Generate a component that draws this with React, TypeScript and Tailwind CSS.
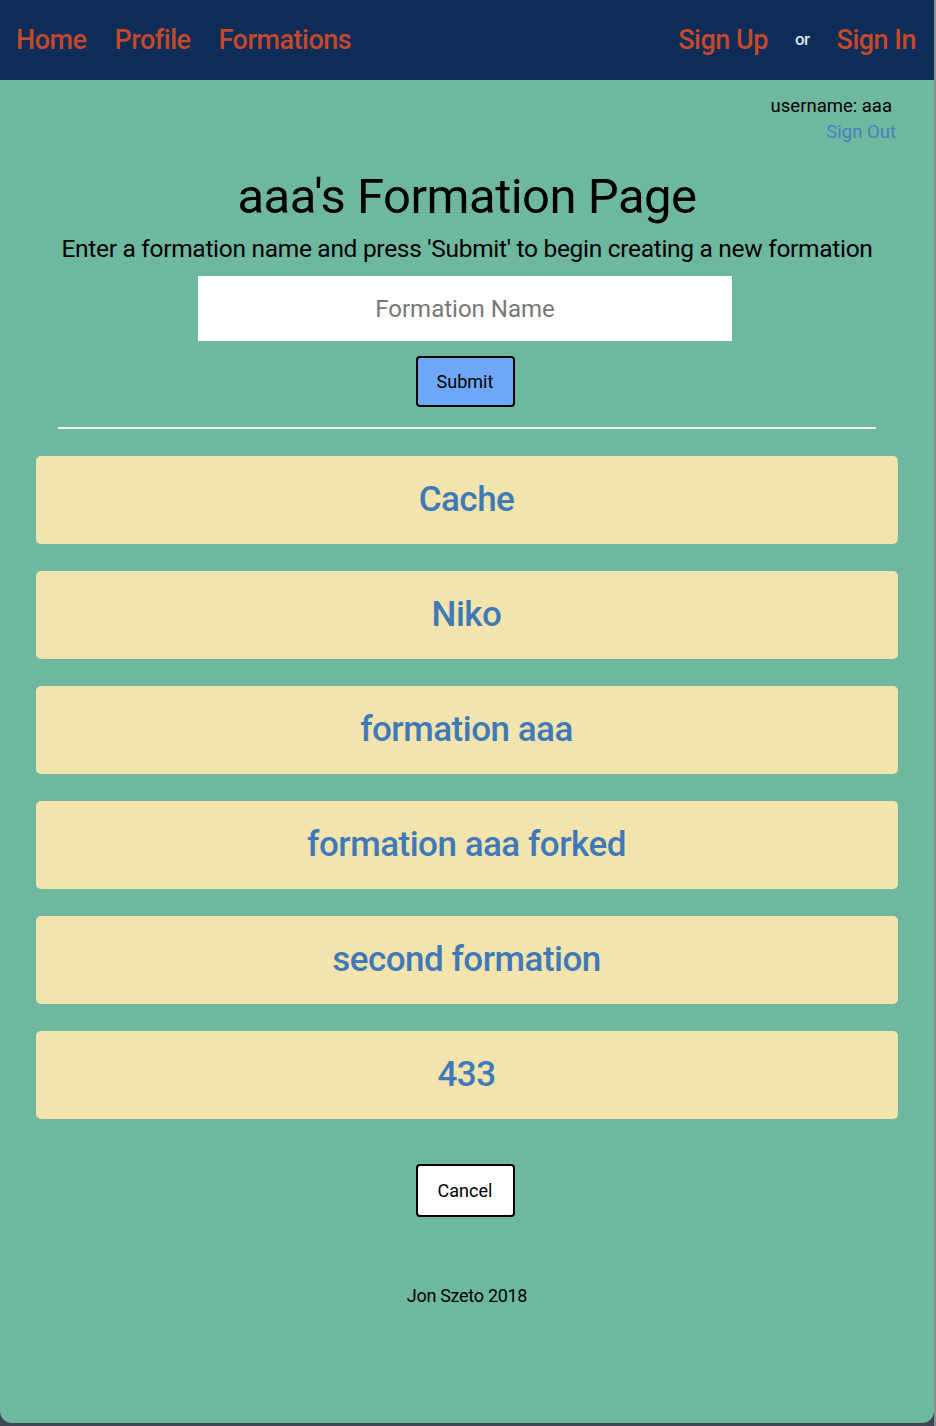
import React from "react";

const formations = ["Cache", "Niko", "formation aaa", "formation aaa forked", "second formation", "433"];

export default function App() {
  return (
    <div className="w-[936px] h-[1426px] bg-[#3d4650] flex" style={{ fontFamily: "Roboto, 'Liberation Sans', sans-serif" }}>
      <div className="w-[934px] h-[1423px] bg-[#6fb8a0] rounded-b-[12px] overflow-hidden flex flex-col">
        <nav className="h-[80px] shrink-0 bg-[#0d2c58] flex items-center justify-between pl-[16px] pr-[18px]">
          <div className="flex items-center gap-[28px] text-[27px] font-medium text-[#c4492a] tracking-[-0.5px]">
            <span>Home</span>
            <span>Profile</span>
            <span>Formations</span>
          </div>
          <div className="flex items-center text-[27px] font-medium text-[#c4492a] tracking-[-0.5px]">
            <span>Sign Up</span>
            <span className="mx-[27px] text-[17px] text-[#dfe3ea]">or</span>
            <span>Sign In</span>
          </div>
        </nav>
        <main className="flex flex-col items-center flex-1">
          <div className="self-end flex flex-col items-end pt-[13px] pr-[38px] text-[18.5px] leading-[26px]">
            <span className="text-black pr-[4px]">username: aaa</span>
            <span className="text-[#4a7fc1]">Sign Out</span>
          </div>
          <h1 className="mt-[24px] text-[49px] leading-[56px] text-black tracking-[-0.5px]">aaa's Formation Page</h1>
          <p className="mt-[8px] text-[24.5px] leading-[32px] text-black tracking-[-0.3px]">Enter a formation name and press 'Submit' to begin creating a new formation</p>
          <input
            className="mt-[11px] ml-[-4px] w-[534px] h-[65px] bg-white text-center text-[24px] text-black placeholder:text-[#777777] outline-none"
            placeholder="Formation Name"
          />
          <button className="mt-[15px] ml-[-4px] w-[99px] h-[51px] bg-[#6fa8f9] border-2 border-black rounded-[4px] text-[18px] text-black">Submit</button>
          <div className="mt-[20px] w-[818px] h-[2px] bg-[#eef2ef] ml-[-1px]" />
          <div className="mt-[27px] w-[862px] flex flex-col gap-[27px] ml-[-1px]">
            {formations.map((f) => (
              <div key={f} className="h-[88px] rounded-[5px] bg-[#f3e4ae] flex items-center justify-center text-[35px] font-medium text-[#4079b8] tracking-[-0.5px]">
                {f}
              </div>
            ))}
          </div>
          <button className="mt-[45px] ml-[-4px] w-[99px] h-[53px] bg-white border-2 border-black rounded-[4px] text-[18px] text-black">Cancel</button>
          <footer className="mt-[65px] text-[18px] text-black tracking-[-0.3px]">Jon Szeto 2018</footer>
        </main>
      </div>
      <div className="w-[2px] h-full bg-[#8a8f94]" />
    </div>
  );
}
